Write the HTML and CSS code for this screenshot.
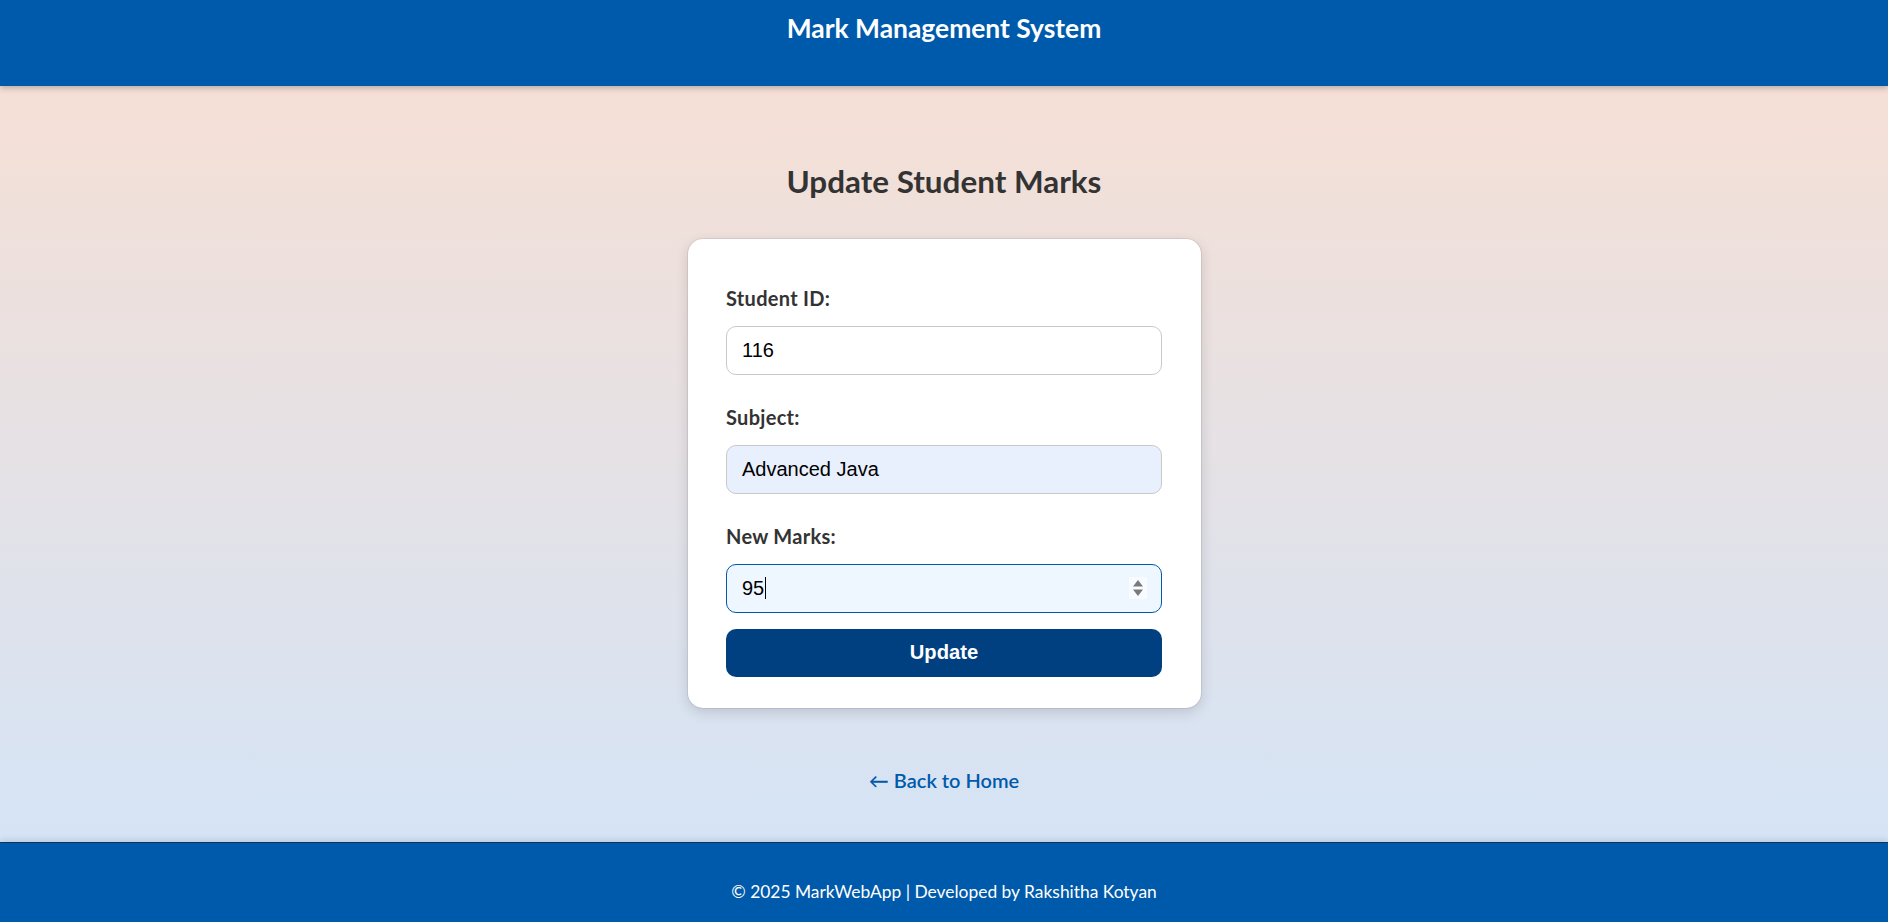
FILE: index.html
```html
<!DOCTYPE html>
<html lang="en">
<head>
<meta charset="utf-8">
<title>Update Student Marks</title>
<link rel="stylesheet" href="styles.css">
</head>
<body>
<header class="site-header">
  <h1 class="site-title">Mark Management System</h1>
</header>
<main class="page">
  <h2 class="page-title">Update Student Marks</h2>
  <form class="card">
    <label class="field-label" for="sid">Student ID:</label>
    <input class="field-input" id="sid" type="text" value="116">
    <label class="field-label" for="subj">Subject:</label>
    <input class="field-input autofilled" id="subj" type="text" value="Advanced Java">
    <label class="field-label" for="marks">New Marks:</label>
    <div class="input-wrap">
      <input class="field-input focused" id="marks" type="text" value="95">
      <span class="caret"></span>
      <span class="spinner">
        <svg width="14" height="22" viewBox="0 0 14 22"><path d="M7 3 L12 9.5 L2 9.5 Z" fill="#7a7a7a"/><path d="M2 12.5 L12 12.5 L7 19 Z" fill="#7a7a7a"/></svg>
      </span>
    </div>
    <button class="btn" type="button">Update</button>
  </form>
  <a class="back-link" href="#">← Back to Home</a>
</main>
<footer class="site-footer">
  <p class="footer-text">© 2025 MarkWebApp | Developed by Rakshitha Kotyan</p>
</footer>
</body>
</html>
```
FILE: styles.css
```css
html, body {
  margin: 0;
  padding: 0;
}
body {
  min-height: 100vh;
  display: flex;
  flex-direction: column;
  font-family: Lato, "Noto Sans", sans-serif;
  background: linear-gradient(to bottom, #f9dfd2 0%, #d1e4f9 100%);
}
.site-header {
  height: 86px;
  box-sizing: border-box;
  padding-top: 13px;
  background: #005aab;
  text-align: center;
  box-shadow: 0 2px 6px rgba(0, 0, 0, 0.25);
  position: relative;
  z-index: 1;
}
.site-title {
  margin: 0;
  font-size: 26.4px;
  line-height: 30px;
  font-weight: 700;
  color: #ffffff;
}
.page {
  flex: 1;
  display: flex;
  flex-direction: column;
  align-items: center;
}
.page-title {
  margin: 76px 0 0;
  font-size: 31.4px;
  line-height: 38px;
  font-weight: 700;
  color: #333333;
}
.card {
  margin-top: 38.5px;
  width: 513px;
  box-sizing: border-box;
  padding: 47px 38.5px 31.5px;
  background: #ffffff;
  border-radius: 15px;
  box-shadow: 0 0 0 1px rgba(0, 0, 0, 0.07), 0 4px 14px rgba(0, 0, 0, 0.14);
  display: flex;
  flex-direction: column;
}
.field-label {
  font-size: 20px;
  letter-spacing: 0.3px;
  line-height: 24px;
  font-weight: 700;
  color: #333333;
  margin-bottom: 16px;
}
.field-input {
  height: 49px;
  box-sizing: border-box;
  width: 100%;
  padding: 0 15px;
  border: 1px solid #c9c9c9;
  border-radius: 10px;
  font-family: "Liberation Sans", Arial, sans-serif;
  font-size: 20px;
  color: #000000;
  background: #ffffff;
  margin: 0 0 30px;
  outline: none;
}
.autofilled {
  background: #e8f0fe;
}
.input-wrap {
  position: relative;
  margin-bottom: 16px;
}
.input-wrap .field-input {
  margin: 0;
}
.focused {
  background: #eef6ff;
  border-color: #005aab;
}
.caret {
  position: absolute;
  left: 38.5px;
  top: 13px;
  width: 1px;
  height: 22px;
  background: #000000;
}
.spinner {
  position: absolute;
  right: 15px;
  top: 13px;
  width: 18px;
  height: 22px;
  background: #f8fbff;
  display: flex;
  align-items: center;
  justify-content: center;
}
.btn {
  height: 48px;
  border: none;
  border-radius: 10px;
  background: #004080;
  color: #ffffff;
  font-family: "Liberation Sans", Arial, sans-serif;
  font-weight: 700;
  font-size: 20.2px;
  cursor: pointer;
}
.back-link {
  margin-top: 60px;
  font-size: 20px;
  line-height: 24px;
  font-weight: 600;
  color: #005aab;
  text-decoration: none;
}
.site-footer {
  height: 80px;
  box-sizing: border-box;
  padding-top: 37px;
  background: #005aab;
  border-top: 1px solid #0b3560;
  box-shadow: 0 -2px 6px rgba(0, 0, 0, 0.12);
  text-align: center;
}
.footer-text {
  margin: 0;
  font-size: 17.4px;
  line-height: 24px;
  color: #ffffff;
}
```
